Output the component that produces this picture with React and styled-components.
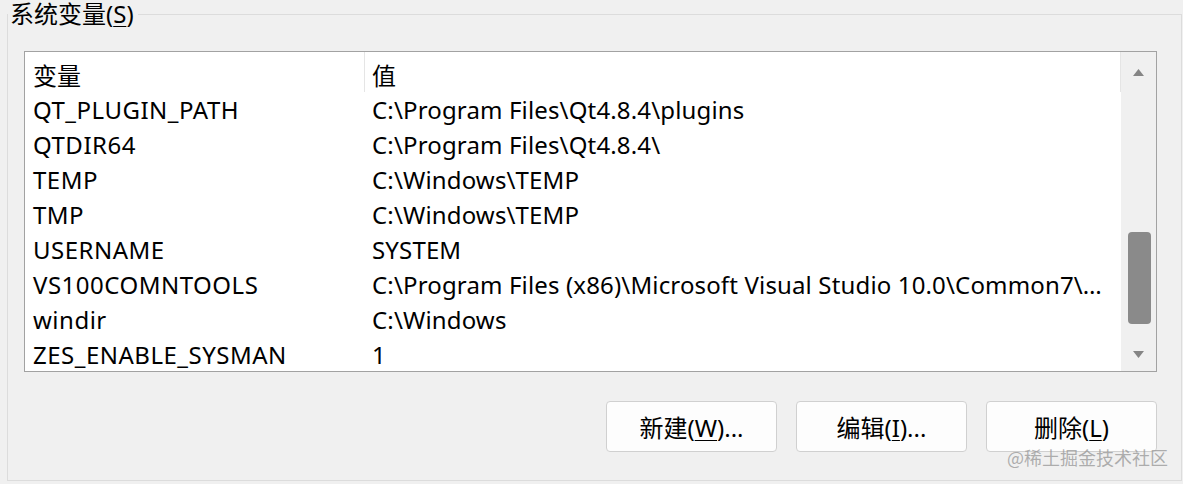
import React from "react";
import styled, { createGlobalStyle } from "styled-components";

const GlobalStyle = createGlobalStyle`
  html, body {
    margin: 0;
    padding: 0;
    background: #f0f0f0;
  }
  body {
    font-family: "Noto Sans", "Noto Sans CJK SC", sans-serif;
    font-size: 24px;
    color: #000;
  }
`;

const Page = styled.div`
  position: relative;
  width: 1183px;
  height: 484px;
  overflow: hidden;
  box-sizing: border-box;
`;

const Group = styled.fieldset`
  margin: 0 1px 0 7px;
  padding: 23px 24px 28px 16px;
  border: 1px solid #dcdcdc;
  min-width: 0;
`;

const Legend = styled.legend`
  margin-left: -16px;
  padding: 0 4px 0 2px;
  line-height: 28px;
  font-size: 24px;
`;

const AccessKey = styled.u`
  text-decoration: underline;
  text-decoration-thickness: 1px;
  text-underline-offset: 3px;
`;

const ListBox = styled.div`
  display: grid;
  grid-template-columns: 1fr 35px;
  height: 321px;
  box-sizing: border-box;
  border: 1px solid #a2a2a2;
  background: #fff;
  overflow: hidden;
`;

const Table = styled.div`
  display: flex;
  flex-direction: column;
  min-width: 0;
`;

const HeaderRow = styled.div`
  display: grid;
  grid-template-columns: 340px 1fr;
  height: 40px;
  flex-shrink: 0;
`;

const HeaderCell = styled.div`
  padding: 5px 0 0 ${({ $first }) => ($first ? 8 : 7)}px;
  line-height: 35px;
  border-right: 1px solid #e5e5e5;
  font-family: "Noto Sans CJK SC", sans-serif;
`;

const Row = styled.div`
  display: grid;
  grid-template-columns: 340px 1fr;
  height: 35px;
  flex-shrink: 0;
`;

const Cell = styled.div`
  padding: 0 8px 0 ${({ $first }) => ($first ? 8 : 7)}px;
  line-height: 35px;
  letter-spacing: ${({ $first }) => ($first ? 0.5 : 0.15)}px;
  white-space: nowrap;
  overflow: hidden;
  text-overflow: ellipsis;
`;

const ScrollBar = styled.div`
  display: flex;
  flex-direction: column;
  background: #f0f0f0;
`;

const ArrowButton = styled.div`
  display: flex;
  align-items: center;
  justify-content: center;
  height: ${({ $height }) => $height}px;
  flex-shrink: 0;
`;

const Track = styled.div`
  flex: 1;
  display: flex;
  flex-direction: column;
`;

const Thumb = styled.div`
  width: 23px;
  height: 92px;
  margin-left: 7px;
  border-radius: 4px;
  background: #8a8a8a;
`;

const ButtonRow = styled.div`
  display: flex;
  justify-content: flex-end;
  gap: 19px;
  margin-top: 29px;
`;

const Button = styled.button`
  width: 171px;
  height: 51px;
  padding: 0;
  border: 1px solid #d0d0d0;
  border-radius: 4px;
  background: #fdfdfd;
  color: #000;
  font-family: "Noto Sans", "Noto Sans CJK SC", sans-serif;
  font-size: 24px;
`;

const Watermark = styled.div`
  position: absolute;
  right: 15px;
  bottom: 14px;
  font-family: "Noto Sans CJK SC", sans-serif;
  font-size: 18px;
  color: rgba(150, 150, 150, 0.75);
  pointer-events: none;
`;

const Arrow = ({ down }) => (
  <svg width="11" height="7" viewBox="0 0 11 7">
    <polygon
      points={down ? "0,0 11,0 5.5,7" : "0,7 11,7 5.5,0"}
      fill="#858585"
    />
  </svg>
);

const variables = [
  ["QT_PLUGIN_PATH", "C:\\Program Files\\Qt4.8.4\\plugins"],
  ["QTDIR64", "C:\\Program Files\\Qt4.8.4\\"],
  ["TEMP", "C:\\Windows\\TEMP"],
  ["TMP", "C:\\Windows\\TEMP"],
  ["USERNAME", "SYSTEM"],
  [
    "VS100COMNTOOLS",
    "C:\\Program Files (x86)\\Microsoft Visual Studio 10.0\\Common7\\Tools\\",
  ],
  ["windir", "C:\\Windows"],
  ["ZES_ENABLE_SYSMAN", "1"],
];

// 滚动条位置: 轨道高度 243, 滑块 92
const scrollFraction = 0.927;
const trackSpace = 243 - 92;

export default function App() {
  return (
    <Page>
      <GlobalStyle />
      <Group>
        <Legend>
          系统变量(<AccessKey>S</AccessKey>)
        </Legend>
        <ListBox>
          <Table>
            <HeaderRow>
              <HeaderCell $first>变量</HeaderCell>
              <HeaderCell>值</HeaderCell>
            </HeaderRow>
            {variables.map(([name, value]) => (
              <Row key={name}>
                <Cell $first>{name}</Cell>
                <Cell>{value}</Cell>
              </Row>
            ))}
          </Table>
          <ScrollBar>
            <ArrowButton $height={40}>
              <Arrow />
            </ArrowButton>
            <Track>
              <Thumb style={{ marginTop: Math.round(trackSpace * scrollFraction) }} />
            </Track>
            <ArrowButton $height={36}>
              <Arrow down />
            </ArrowButton>
          </ScrollBar>
        </ListBox>
        <ButtonRow>
          <Button>
            新建(<AccessKey>W</AccessKey>)...
          </Button>
          <Button>
            编辑(<AccessKey>I</AccessKey>)...
          </Button>
          <Button>
            删除(<AccessKey>L</AccessKey>)
          </Button>
        </ButtonRow>
      </Group>
      <Watermark>@稀土掘金技术社区</Watermark>
    </Page>
  );
}
